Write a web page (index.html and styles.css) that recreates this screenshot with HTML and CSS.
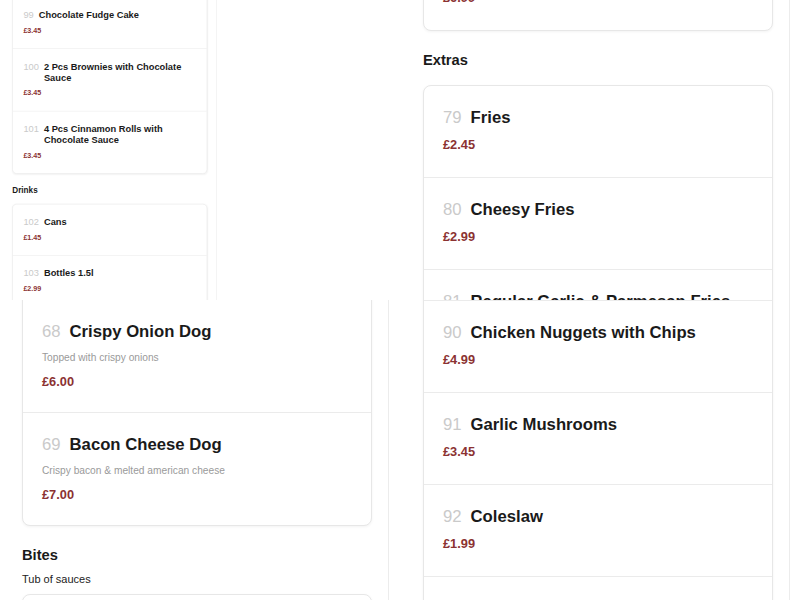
FILE: index.html
```html
<!DOCTYPE html>
<html lang="en">
<head>
<meta charset="utf-8">
<title>Menu</title>
<link rel="stylesheet" href="styles.css">
</head>
<body>
<div class="board">

  <section class="tile tile-tl">
    <div class="mini">
      <div class="col">
        <div class="card">
          <div class="item">
            <div class="item-head"><span class="num">98</span><span class="name">Vanilla Ice Cream</span></div>
            <p class="price">£2.95</p>
          </div>
          <div class="item">
            <div class="item-head"><span class="num">99</span><span class="name">Chocolate Fudge Cake</span></div>
            <p class="price">£3.45</p>
          </div>
          <div class="item">
            <div class="item-head"><span class="num">100</span><span class="name">2 Pcs Brownies with Chocolate Sauce</span></div>
            <p class="price">£3.45</p>
          </div>
          <div class="item">
            <div class="item-head"><span class="num">101</span><span class="name">4 Pcs Cinnamon Rolls with Chocolate Sauce</span></div>
            <p class="price">£3.45</p>
          </div>
        </div>
        <h2 class="sec-title">Drinks</h2>
        <div class="card">
          <div class="item">
            <div class="item-head"><span class="num">102</span><span class="name">Cans</span></div>
            <p class="price">£1.45</p>
          </div>
          <div class="item">
            <div class="item-head"><span class="num">103</span><span class="name">Bottles 1.5l</span></div>
            <p class="price">£2.99</p>
          </div>
          <div class="item">
            <div class="item-head"><span class="num">104</span><span class="name">Water</span></div>
            <p class="price">£1.00</p>
          </div>
        </div>
      </div>
    </div>
  </section>

  <section class="tile tile-tr">
    <div class="col">
      <div class="card">
        <div class="item">
          <div class="item-head"><span class="num">78</span><span class="name">Loaded Fries</span></div>
          <p class="price">£6.99</p>
        </div>
      </div>
      <h2 class="sec-title">Extras</h2>
      <div class="card">
        <div class="item">
          <div class="item-head"><span class="num">79</span><span class="name">Fries</span></div>
          <p class="price">£2.45</p>
        </div>
        <div class="item">
          <div class="item-head"><span class="num">80</span><span class="name">Cheesy Fries</span></div>
          <p class="price">£2.99</p>
        </div>
        <div class="item">
          <div class="item-head"><span class="num">81</span><span class="name">Regular Garlic &amp; Parmesan Fries</span></div>
          <p class="price">£3.49</p>
        </div>
      </div>
    </div>
  </section>

  <section class="tile tile-bl">
    <div class="col">
      <div class="card">
        <div class="item">
          <div class="item-head"><span class="num">67</span><span class="name">Chilli Cheese Dog</span></div>
          <p class="desc">Beef chilli &amp; melted cheese</p>
          <p class="price">£7.00</p>
        </div>
        <div class="item">
          <div class="item-head"><span class="num">68</span><span class="name">Crispy Onion Dog</span></div>
          <p class="desc">Topped with crispy onions</p>
          <p class="price">£6.00</p>
        </div>
        <div class="item">
          <div class="item-head"><span class="num">69</span><span class="name">Bacon Cheese Dog</span></div>
          <p class="desc">Crispy bacon &amp; melted american cheese</p>
          <p class="price">£7.00</p>
        </div>
      </div>
      <h2 class="sec-title">Bites</h2>
      <p class="sec-desc">Tub of sauces</p>
      <div class="card">
        <div class="item">
          <div class="item-head"><span class="num">70</span><span class="name">Garlic Mayo</span></div>
          <p class="price">£0.99</p>
        </div>
      </div>
    </div>
  </section>

  <section class="tile tile-br">
    <div class="col">
      <div class="card">
        <div class="item">
          <div class="item-head"><span class="num">89</span><span class="name">Onion Rings</span></div>
          <p class="price">£2.99</p>
        </div>
        <div class="item">
          <div class="item-head"><span class="num">90</span><span class="name">Chicken Nuggets with Chips</span></div>
          <p class="price">£4.99</p>
        </div>
        <div class="item">
          <div class="item-head"><span class="num">91</span><span class="name">Garlic Mushrooms</span></div>
          <p class="price">£3.45</p>
        </div>
        <div class="item">
          <div class="item-head"><span class="num">92</span><span class="name">Coleslaw</span></div>
          <p class="price">£1.99</p>
        </div>
        <div class="item">
          <div class="item-head"><span class="num">93</span><span class="name">Mozzarella Sticks</span></div>
          <p class="price">£3.99</p>
        </div>
      </div>
    </div>
  </section>

</div>
</body>
</html>
```

FILE: styles.css
```css
* {
  box-sizing: border-box;
  margin: 0;
  padding: 0;
}

body {
  font-family: "Liberation Sans", Arial, sans-serif;
  background: #ffffff;
  color: #1a1a1a;
}

.board {
  display: grid;
  grid-template-columns: 401px 399px;
  grid-template-rows: 300px 300px;
  width: 800px;
  height: 600px;
  overflow: hidden;
}

.tile {
  overflow: hidden;
  background: #ffffff;
}

.col {
  width: 389px;
  min-height: 1100px;
  padding: 0 16px 0 22px;
  border-right: 1px solid #ececec;
}

.mini {
  display: flow-root;
  width: 389px;
  transform: scale(0.557);
  transform-origin: 0 0;
}

.tile-tl .col {
  margin-top: -97px;
}

.tile-tr .col {
  margin-top: -62px;
}

.tile-bl .col {
  margin-top: -114px;
}

.tile-br .col {
  margin-top: -92px;
}

.card {
  background: #ffffff;
  border: 1px solid #e7e7e7;
  border-radius: 8px;
  box-shadow: 0 1px 3px rgba(0, 0, 0, 0.05);
}

.item {
  padding: 22px 19px 25px;
  border-bottom: 1px solid #ebebeb;
}

.item:has(.desc) {
  padding-bottom: 23px;
}

.item:last-child {
  border-bottom: 0;
}

.item-head {
  display: flex;
  align-items: flex-start;
  gap: 9px;
  font-size: 16.7px;
  line-height: 20px;
}

.num {
  flex: none;
  color: #cacaca;
}

.name {
  flex: 1;
  font-weight: 700;
  color: #1a1a1a;
}

.desc {
  margin-top: 9px;
  font-size: 10.2px;
  line-height: 14px;
  color: #9a9a9a;
}

.price {
  margin-top: 9px;
  font-size: 12.8px;
  line-height: 15px;
  font-weight: 700;
  color: #8b3232;
}

.sec-title {
  margin: 20px 0 16px;
  font-size: 14.7px;
  line-height: 18px;
  font-weight: 700;
  color: #1a1a1a;
}

.sec-desc {
  margin: -8px 0 8px;
  font-size: 11px;
  line-height: 14px;
  color: #222222;
}
```
